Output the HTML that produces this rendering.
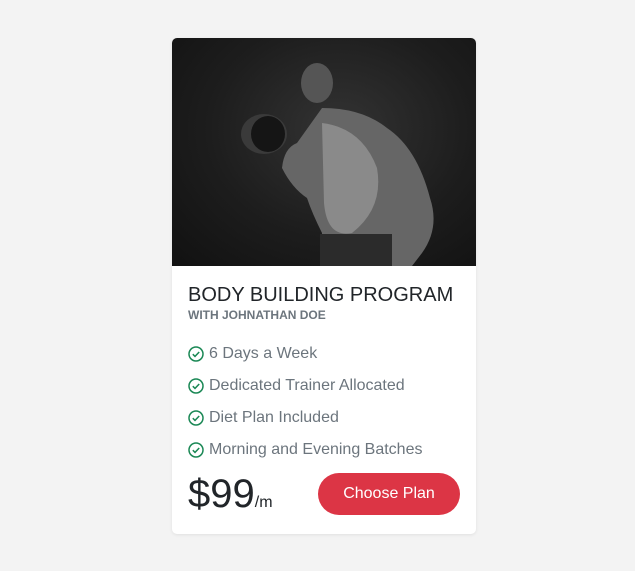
<!DOCTYPE html>
<html><head><style>
body{margin:0;background:#f3f3f3;font-family:"Liberation Sans",sans-serif;width:635px;height:571px;position:relative;overflow:hidden}
.card{position:absolute;left:172px;top:38px;width:304px;height:496px;background:#fff;border-radius:5px;overflow:hidden;box-shadow:0 1px 3px rgba(0,0,0,.08)}
.img{position:absolute;left:0;top:0;width:304px;height:228px;background:radial-gradient(ellipse at 55% 40%,#333 0%,#1d1d1d 55%,#111 100%)}
.t{position:absolute;left:16px;top:246px;font-size:20px;color:#212529;white-space:nowrap}
.s{position:absolute;left:16px;top:270px;font-size:12px;font-weight:bold;color:#6c757d}
.li{position:absolute;left:16px;font-size:16px;color:#6c757d;white-space:nowrap;display:flex;align-items:center}
.li svg{margin-right:5px}
.p{position:absolute;left:16px;top:434px;font-size:40px;color:#212529}
.p small{font-size:16px}
.b{position:absolute;left:146px;top:435px;width:142px;height:42px;border-radius:21px;background:#dc3545;color:#fff;font-size:16px;text-align:center;line-height:42px}
</style></head><body>
<div class="card">
<div class="img"><svg width="304" height="228">
<ellipse cx="92" cy="96" rx="23" ry="20" fill="#3a3a3a"/><ellipse cx="96" cy="96" rx="17" ry="18" fill="#151515"/>
<ellipse cx="145" cy="45" rx="16" ry="20" fill="#555"/>
<path d="M110 130 Q112 110 125 105 L150 70 Q190 70 215 90 Q245 110 258 160 Q268 190 250 215 L240 228 L150 228 L150 195 Q140 175 135 160 Q120 150 110 130 Z" fill="#666"/>
<path d="M150 85 Q190 90 205 130 Q212 170 180 195 Q155 200 152 165 Z" fill="#8a8a8a"/>
<rect x="148" y="196" width="72" height="32" fill="#2b2b2b"/>
</svg></div>
<div class="t">BODY BUILDING PROGRAM</div>
<div class="s">WITH JOHNATHAN DOE</div>
<div class="li" style="top:307px"><svg width="16" height="16" viewBox="0 0 16 16"><circle cx="8" cy="8" r="7" fill="none" stroke="#198754" stroke-width="1.5"/><path d="M4.8 8.2l2.2 2.2 4.2-4.4" fill="none" stroke="#198754" stroke-width="1.5"/></svg>6 Days a Week</div>
<div class="li" style="top:339px"><svg width="16" height="16" viewBox="0 0 16 16"><circle cx="8" cy="8" r="7" fill="none" stroke="#198754" stroke-width="1.5"/><path d="M4.8 8.2l2.2 2.2 4.2-4.4" fill="none" stroke="#198754" stroke-width="1.5"/></svg>Dedicated Trainer Allocated</div>
<div class="li" style="top:371px"><svg width="16" height="16" viewBox="0 0 16 16"><circle cx="8" cy="8" r="7" fill="none" stroke="#198754" stroke-width="1.5"/><path d="M4.8 8.2l2.2 2.2 4.2-4.4" fill="none" stroke="#198754" stroke-width="1.5"/></svg>Diet Plan Included</div>
<div class="li" style="top:403px"><svg width="16" height="16" viewBox="0 0 16 16"><circle cx="8" cy="8" r="7" fill="none" stroke="#198754" stroke-width="1.5"/><path d="M4.8 8.2l2.2 2.2 4.2-4.4" fill="none" stroke="#198754" stroke-width="1.5"/></svg>Morning and Evening Batches</div>
<div class="p">$99<small>/m</small></div>
<div class="b">Choose Plan</div>
</div>
</body></html>
